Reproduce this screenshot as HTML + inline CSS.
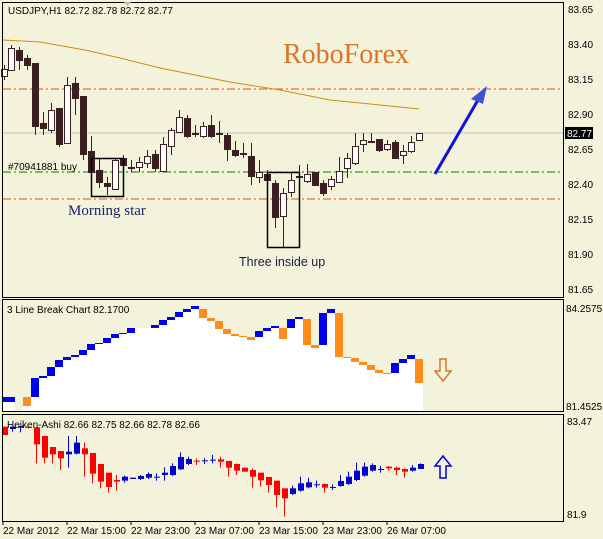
<!DOCTYPE html>
<html><head><meta charset="utf-8"><style>
html,body{margin:0;padding:0;background:#f3f3dc;}
svg{display:block;}
text{font-family:"Liberation Sans",sans-serif;}
</style></head><body>
<svg id="s" width="603" height="539" viewBox="0 0 603 539" xmlns="http://www.w3.org/2000/svg">
<rect width="603" height="539" fill="#f3f3dc"/>
<g id="main"></g>
<g id="lb"></g>
<g id="ha"></g>
<rect x="2.5" y="2.5" width="561" height="295" fill="none" stroke="#000"/>
<polygon points="124,2 131,2 127.5,6" fill="#bbb"/>
<text x="8" y="14" font-size="10" fill="#000">USDJPY,H1  82.72 82.78 82.72 82.77</text>
<text x="283" y="63" font-size="28" fill="#d9742a" style="font-family:'Liberation Serif',serif">RoboForex</text>
<text x="8" y="170" font-size="10" fill="#000">#70941881 buy</text>
<text x="68" y="215" font-size="15" fill="#1e1e6e" style="font-family:'Liberation Serif',serif">Morning star</text>
<text x="239" y="266" font-size="12.5" fill="#1a1a40">Three inside up</text>
<g font-size="10" fill="#000">
<text x="568" y="13">83.65</text><text x="568" y="48">83.40</text><text x="568" y="83">83.15</text>
<text x="568" y="118">82.90</text><text x="568" y="153">82.65</text><text x="568" y="188">82.40</text>
<text x="568" y="223">82.15</text><text x="568" y="258">81.90</text><text x="568" y="293">81.65</text>
</g>
<rect x="565" y="127" width="28" height="12" fill="#000"/>
<text x="567" y="137" font-size="10" fill="#fff">82.77</text>
<rect x="2.5" y="299.5" width="561" height="112" fill="none" stroke="#000"/>
<text x="7" y="313" font-size="10" fill="#000">3 Line Break Chart 82.1700</text>
<text x="566" y="312" font-size="10" fill="#000">84.2575</text>
<text x="566" y="410" font-size="10" fill="#000">81.4525</text>
<path d="M440 359 h6 v12 h5 l-8 10 l-8 -10 h5 z" fill="none" stroke="#d9742a" stroke-width="1.5"/>
<rect x="2.5" y="414.5" width="561" height="107" fill="none" stroke="#000"/>
<text x="7" y="428" font-size="10" fill="#000">Heiken-Ashi 82.66 82.75 82.66 82.78 82.66</text>
<text x="567" y="425" font-size="10" fill="#000">83.47</text>
<text x="567" y="518" font-size="10" fill="#000">81.9</text>
<path d="M440 478 h6 v-12 h5 l-8 -10 l-8 10 h5 z" fill="none" stroke="#0000e0" stroke-width="1.5"/>
<g font-size="10" fill="#000">
<text x="3" y="534">22 Mar 2012</text><text x="67" y="534">22 Mar 15:00</text><text x="131" y="534">22 Mar 23:00</text>
<text x="195" y="534">23 Mar 07:00</text><text x="259" y="534">23 Mar 15:00</text><text x="323" y="534">23 Mar 23:00</text>
<text x="387" y="534">26 Mar 07:00</text>
</g>
<g stroke="#000"><path d="M3 522v3M67 522v3M131 522v3M195 522v3M259 522v3M323 522v3M387 522v3"/></g>
</svg>
<script>
var NS="http://www.w3.org/2000/svg";
function el(p,t,a){var e=document.createElementNS(NS,t);for(var k in a)e.setAttribute(k,a[k]);document.getElementById(p).appendChild(e);return e;}
el("main","line",{x1:3,y1:89,x2:563,y2:89,stroke:"#f04a1a","stroke-dasharray":"8,3,2,3"});
el("main","line",{x1:3,y1:199,x2:563,y2:199,stroke:"#f04a1a","stroke-dasharray":"8,3,2,3"});
el("main","line",{x1:3,y1:172,x2:563,y2:172,stroke:"#008000","stroke-dasharray":"8,3,2,3"});
el("main","line",{x1:3,y1:133,x2:563,y2:133,stroke:"#c0c0c0"});
el("main","polyline",{points:"3,40 40,42 85,50 120,58 160,68 200,76 230,82 280,90 330,100 380,105 419,109",fill:"none",stroke:"#c8901a","stroke-width":1});
var C=[[4,69,76,65,80,0],[11,48,70,45,70,0],[19,50,60,47,70,1],[27,58,65,55,70,1],[35,63,126,63,135,1],[43,123,128,112,135,1],[51,110,130,103,133,0],[59,108,144,108,147,1],[67,85,143,77,143,0],[75,83,98,77,115,1],[83,96,154,96,160,1],[91,151,172,136,172,1],[99,170,182,158,188,1],[107,183,186,177,195,1],[115,160,189,158,190,0],[123,158,165,155,170,1],[131,167,168,160,172,1],[139,162,167,157,172,0],[147,156,163,150,168,0],[155,154,168,150,172,1],[163,144,171,137,172,0],[171,130,146,128,155,0],[179,117,132,110,132,0],[187,118,136,115,138,1],[195,133,134,125,137,1],[203,126,136,122,138,0],[211,125,136,115,138,1],[219,133,134,121,143,1],[227,135,149,133,161,1],[235,150,155,141,157,1],[243,153,154,143,158,1],[251,156,176,143,185,1],[259,172,177,160,183,0],[267,174,180,170,182,1],[275,183,217,180,228,1],[283,193,216,188,247,0],[291,180,192,173,197,0],[299,176,177,165,180,1],[307,174,181,164,183,0],[315,172,185,172,186,1],[323,183,193,180,196,1],[331,179,186,176,190,0],[339,171,182,157,183,0],[347,158,168,153,178,0],[355,146,163,133,165,0],[363,140,144,133,152,0],[371,141,142,133,143,1],[379,139,150,139,152,1],[387,144,149,140,151,0],[395,142,158,140,158,1],[403,151,155,145,164,0],[411,142,151,136,153,0],[419,133,140,133,141,0]];
C.forEach(function(c){el("main","line",{x1:c[0]+.5,y1:c[3],x2:c[0]+.5,y2:c[4],stroke:"#3a2020"});
el("main","rect",{x:c[0]-2.5,y:c[1]+.5,width:6,height:Math.max(1,c[2]-c[1]),fill:c[5]?"#3a2020":"#fff",stroke:"#3a2020"});});
el("main","rect",{x:91.5,y:158.5,width:32,height:38,fill:"none",stroke:"#000","stroke-width":1.5});
el("main","rect",{x:267.5,y:172.5,width:32,height:75,fill:"none",stroke:"#000","stroke-width":1.5});
el("main","line",{x1:435,y1:174,x2:478,y2:100,stroke:"#1010e0","stroke-width":3});
el("main","polygon",{points:"487,86 471,99 483,104",fill:"#4050d8"});
var B=[[3,15,397,402,0],[23,31,397,406,1],[31,39,378,397,0],[39,47,376,378,0],[47,55,367,376,0],[55,63,360,367,0],[63,71,357,360,0],[71,79,355,357,0],[79,87,350,355,0],[87,95,344,350,0],[95,103,343,344,0],[103,111,338,343,0],[111,119,334,338,0],[119,127,333,334,0],[127,135,328,333,0],[135,151,328,328,2],[151,159,325,328,0],[159,167,320,325,0],[167,175,317,320,0],[175,183,312,317,0],[183,191,309,312,0],[191,199,306,309,0],[199,207,309,318,1],[207,215,318,321,1],[215,223,321,329,1],[223,231,329,334,1],[231,239,334,336,1],[239,247,336,337,1],[247,255,337,340,1],[255,263,331,337,0],[263,271,328,331,0],[271,279,326,328,0],[279,287,328,339,1],[287,295,319,328,0],[295,303,317,319,0],[303,311,319,345,1],[311,319,345,348,1],[319,327,313,345,0],[327,335,309,313,0],[335,343,313,357,1],[343,351,357,358,1],[351,359,358,362,1],[359,367,362,365,1],[367,375,365,370,1],[375,383,370,373,1],[383,391,373,374,1],[391,399,363,373,0],[399,407,359,363,0],[407,415,355,359,0],[415,423,359,383,1]];
B.forEach(function(b){el("lb","rect",{x:b[0],y:b[2],width:b[1]-b[0],height:411-b[2],fill:"#fff"});});
B.forEach(function(b){if(b[4]==2)return;el("lb","rect",{x:b[0],y:b[2],width:b[1]-b[0],height:Math.max(1,b[3]-b[2]),fill:b[4]?"#ff8c1a":"#0000f0"});});
var H=[[395,420,395,420,1],[395,402,395,410,0],[393,398,393,412,0],[395,398,395,400,1],[397,448,397,505,1],[423,488,423,505,1],[456,478,456,505,1],[468,490,468,525,1],[470,478,423,518,0],[443,476,423,478,0],[460,478,443,545,1],[474,536,474,565,1],[507,560,507,580,1],[533,576,533,593,1],[555,560,540,587,1],[545,557,542,563,0],[548,552,548,552,0],[543,552,540,555,0],[537,548,532,552,0],[545,547,535,557,0],[533,540,517,557,0],[513,540,505,543,0],[486,523,472,525,0],[492,507,485,510,0],[497,500,490,510,1],[496,498,490,507,0],[494,496,480,505,0],[493,500,485,518,1],[498,518,498,545,1],[507,527,505,540,1],[518,530,518,530,1],[525,545,520,578,1],[533,556,533,575,1],[546,570,546,593,1],[557,600,557,637,1],[580,610,580,665,1],[580,597,572,600,0],[565,587,545,590,0],[562,577,548,580,0],[568,570,557,578,0],[567,578,565,593,1],[576,578,568,585,0],[558,573,540,575,0],[545,567,530,570,0],[527,555,503,558,0],[515,542,503,545,0],[510,527,505,530,0],[522,524,513,533,0],[515,520,513,527,1],[518,525,515,540,1],[522,530,520,548,1],[518,527,510,530,0],[507,522,505,522,0]];
H.forEach(function(h,i){var x=4+8*i,f=function(z){return z/3+295;};var col=h[4]?"#ff0000":"#0000d0";
el("ha","line",{x1:x+.5,y1:f(h[2]),x2:x+.5,y2:f(h[3]),stroke:col});
el("ha","rect",{x:x-2,y:f(h[0]),width:6,height:Math.max(1,f(h[1])-f(h[0])),fill:col});});
</script>
</body></html>
